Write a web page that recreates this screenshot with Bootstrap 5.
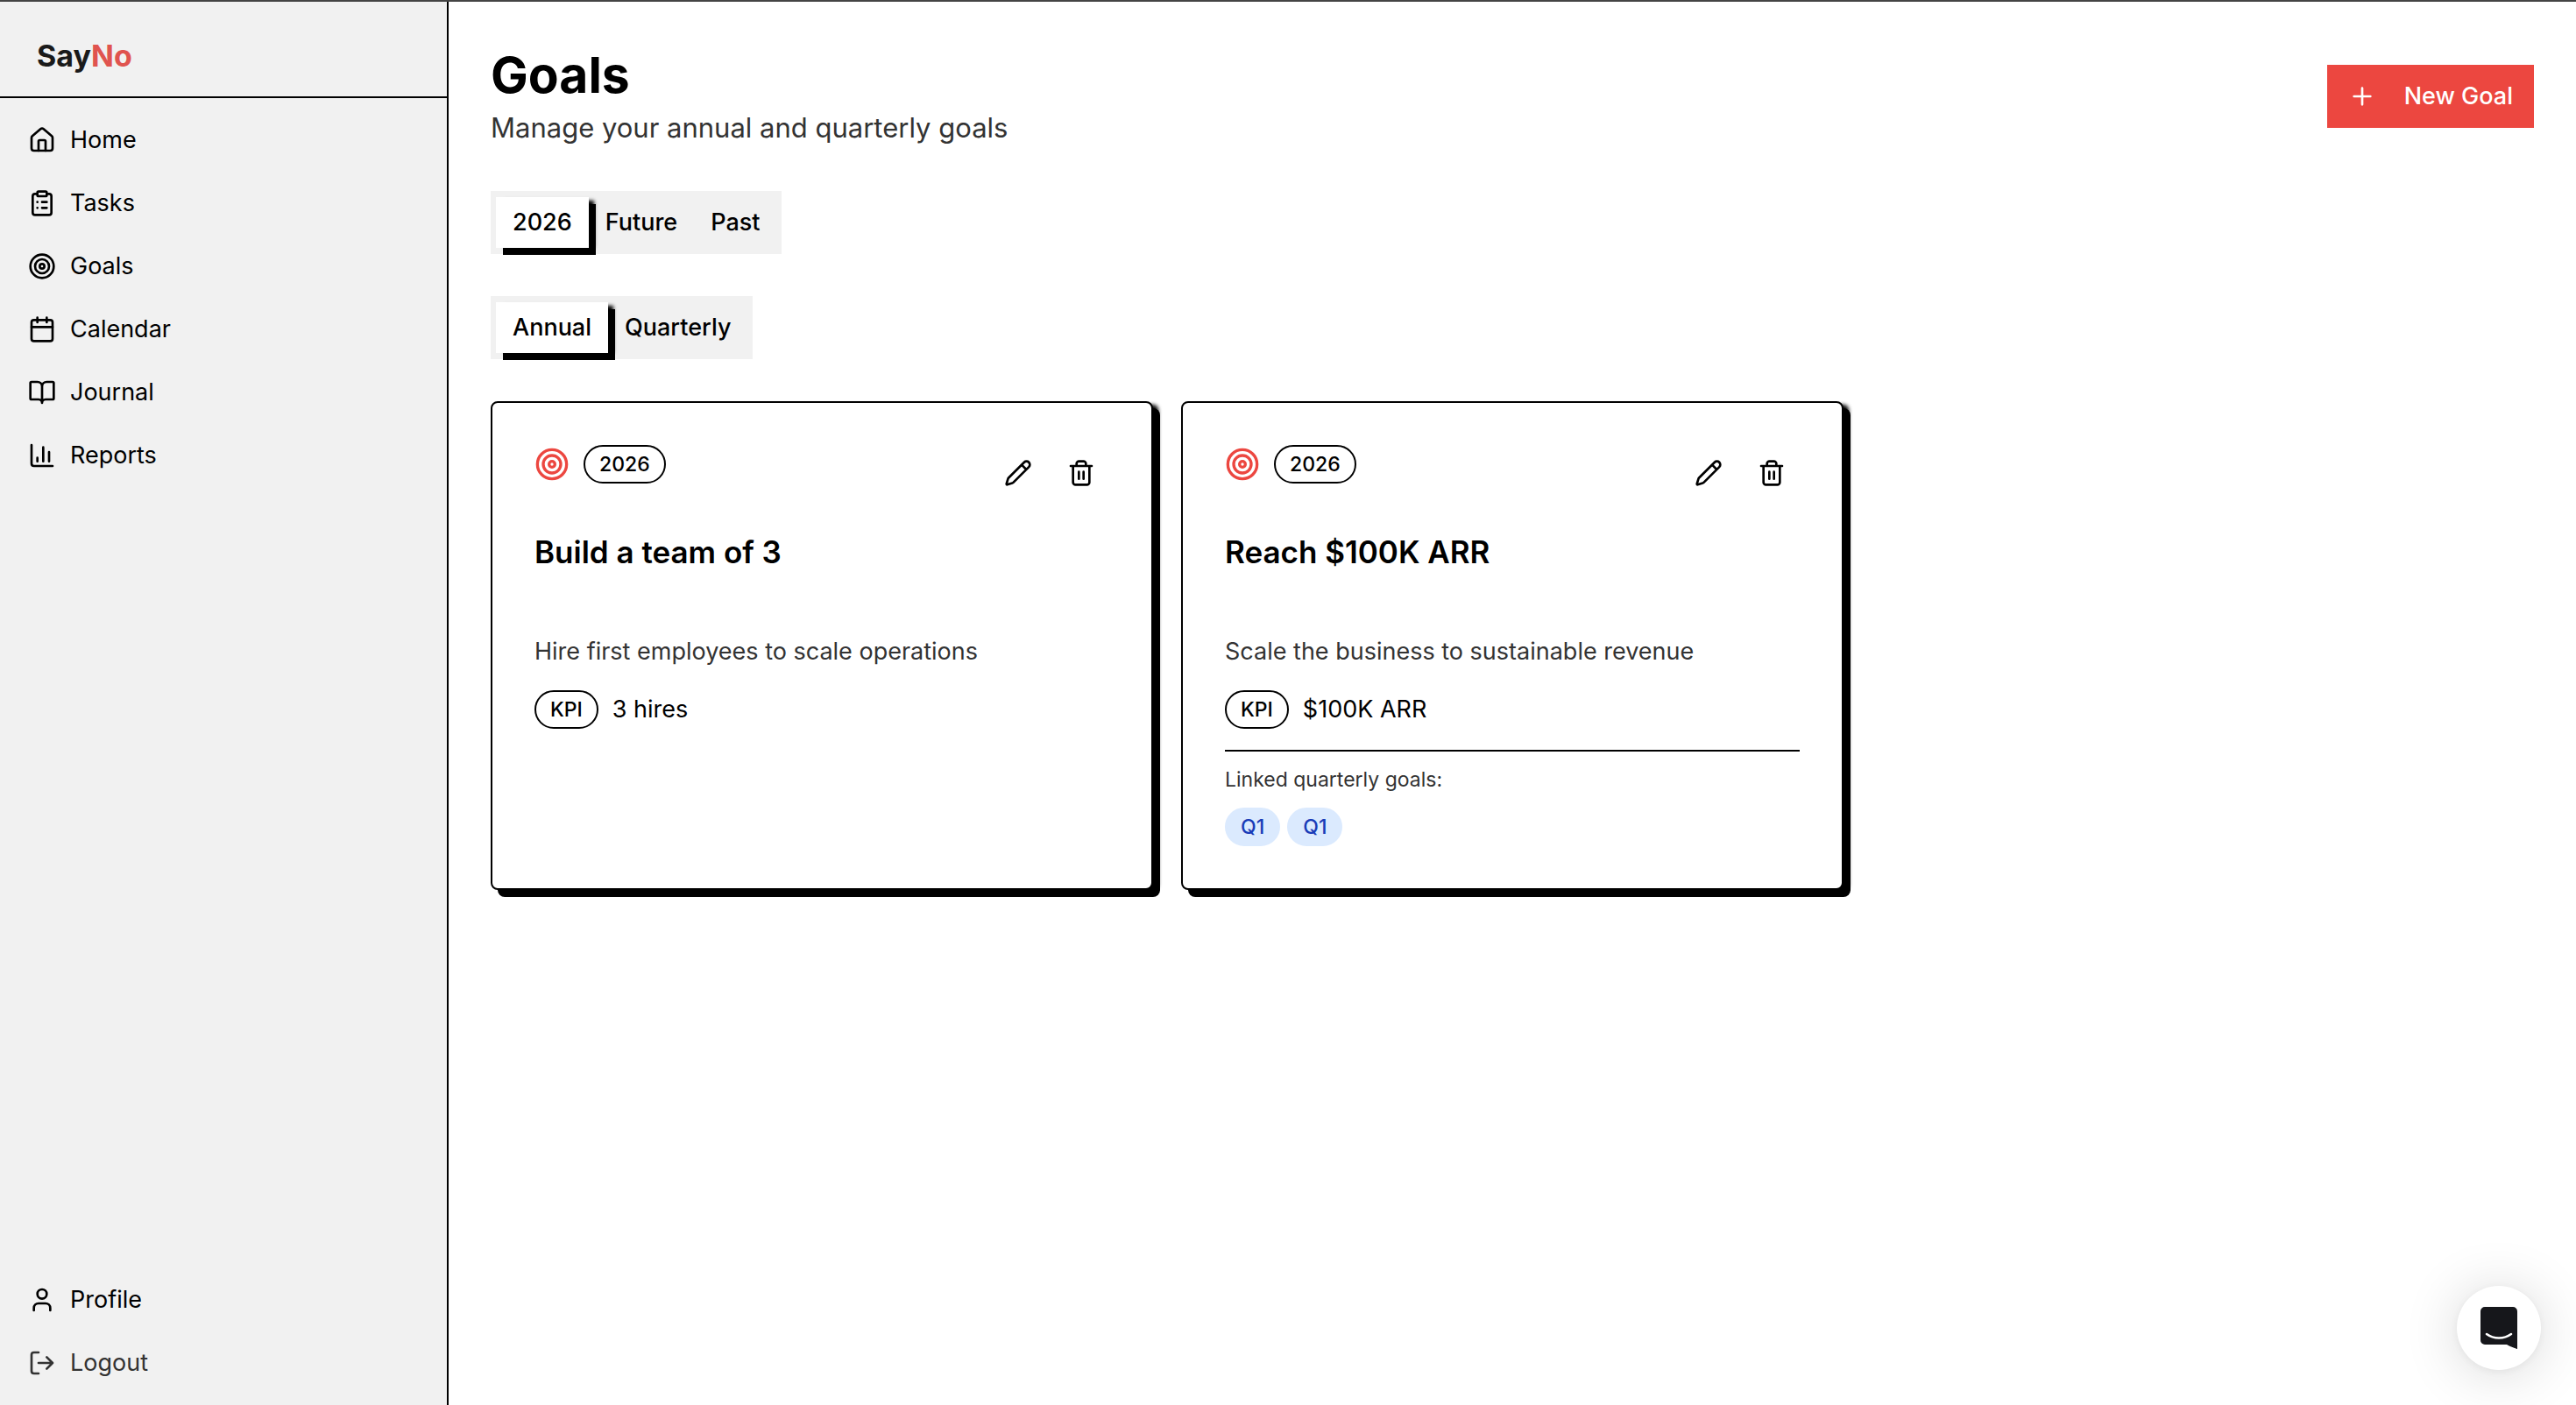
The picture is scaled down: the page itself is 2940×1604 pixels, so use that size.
<!DOCTYPE html>
<html lang="en">
<head>
<meta charset="utf-8">
<meta name="viewport" content="width=device-width, initial-scale=1">
<title>Goals - SayNo</title>
<link href="https://cdn.jsdelivr.net/npm/bootstrap@5.3.0/dist/css/bootstrap.min.css" rel="stylesheet">
<style>
  :root { --accent: #ec4740; --panel: #f1f1f1; --soft: #333; }
  body { font-family: Inter, "Open Sans", sans-serif; font-size: 27px; line-height: 40px; color: #000; border-top: 2px solid #444; background: #fff; }
  svg.ico { width: 32px; height: 32px; fill: none; stroke: currentColor; stroke-width: 2; stroke-linecap: round; stroke-linejoin: round; flex: none; }
  .sidebar { width: 512px; background: var(--panel); border-right: 2px solid #000; }
  .brand { padding: 42px 42px 26px; border-bottom: 2px solid #000; font-size: 34px; font-weight: 700; color: #1a1a1a; }
  .brand:hover { color: #1a1a1a; }
  .brand span { color: #e0544f; }
  .side-nav { gap: 8px; padding: 16px; }
  .side-nav .nav-link { display: flex; align-items: center; gap: 16px; height: 64px; padding: 0 16px; color: #000; width: 100%; border: 0; background: none; }
  .side-nav .logout { color: var(--soft); }
  .page { padding: 48px; }
  .page-title { font-size: 57px; line-height: 72px; font-weight: 700; }
  .page-sub { font-size: 31px; line-height: 48px; color: var(--soft); }
  .btn-new { --bs-btn-color: #fff; --bs-btn-bg: var(--accent); --bs-btn-hover-color: #fff; --bs-btn-hover-bg: #d63c36; --bs-btn-border-width: 0; --bs-btn-border-radius: 0; --bs-btn-padding-x: 24px; --bs-btn-padding-y: 16px; --bs-btn-font-size: 27px; --bs-btn-font-weight: 500; --bs-btn-line-height: 40px; gap: 32px; }
  .sections { display: flex; flex-direction: column; align-items: flex-start; gap: 48px; margin-top: 48px; }
  .seg { background: var(--panel); padding: 7px 6px; }
  .seg .nav-link { color: #000; font-weight: 500; padding: 9px 19px; border: 0; border-radius: 0; background: none; }
  .seg .nav-link.active, .goal { background: #fff; box-shadow: 8px 8px 0 0 #000, 8px 2px 4px -2px #000; }
  .goal-grid { --bs-gutter-x: 32px; --bs-gutter-y: 0; align-self: stretch; }
  .goal { border: 2px solid #000; border-radius: 8px; padding: 48px; height: 100%; }
  .goal .target { width: 40px; height: 40px; color: var(--accent); }
  .tag { display: inline-flex; align-items: center; height: 44px; border: 2px solid #000; border-radius: 22px; padding: 0 16px; font-size: 23px; line-height: 32px; font-weight: 500; }
  .tag-q { background: #dbeafe; border-color: #dbeafe; color: #193cb8; }
  .icon-btn { width: 64px; height: 64px; padding: 0; border: 0; color: #000; display: flex; align-items: center; justify-content: center; }
  .goal-title { font-size: 35px; line-height: 40px; font-weight: 600; margin: 38px 0 74px; }
  .goal-text { color: var(--soft); margin-bottom: 24px; }
  .linked { border-top: 2px solid #000; margin-top: 24px; padding-top: 16px; }
  .linked p { font-size: 23px; line-height: 32px; color: var(--soft); margin-bottom: 16px; }
  .chat { right: 40px; bottom: 40px; width: 96px; height: 96px; border: 0; border-radius: 50%; background: #fff; padding: 0; box-shadow: 0 2px 12px rgba(0,0,0,.06), 0 4px 64px rgba(0,0,0,.16); }
  .chat svg { width: 42px; height: 48px; display: block; margin: 0 auto; }
</style>
</head>
<body class="d-flex min-vh-100">
<aside class="sidebar d-flex flex-column flex-shrink-0">
  <a href="#" class="brand d-block text-decoration-none">Say<span>No</span></a>
  <nav class="side-nav nav flex-column">
    <a class="nav-link" href="#"><svg class="ico" viewBox="0 0 24 24"><path d="M15 21v-8a1 1 0 0 0-1-1h-4a1 1 0 0 0-1 1v8"/><path d="M3 10a2 2 0 0 1 .709-1.528l7-5.999a2 2 0 0 1 2.582 0l7 5.999A2 2 0 0 1 21 10v9a2 2 0 0 1-2 2H5a2 2 0 0 1-2-2z"/></svg>Home</a>
    <a class="nav-link" href="#"><svg class="ico" viewBox="0 0 24 24"><rect width="8" height="4" x="8" y="2" rx="1"/><path d="M16 4h2a2 2 0 0 1 2 2v14a2 2 0 0 1-2 2H6a2 2 0 0 1-2-2V6a2 2 0 0 1 2-2h2M12 11h4M12 16h4M8 11h.01M8 16h.01"/></svg>Tasks</a>
    <a class="nav-link" href="#" aria-current="page"><svg class="ico" viewBox="0 0 24 24"><circle cx="12" cy="12" r="10"/><circle cx="12" cy="12" r="6"/><circle cx="12" cy="12" r="2"/></svg>Goals</a>
    <a class="nav-link" href="#"><svg class="ico" viewBox="0 0 24 24"><path d="M8 2v4M16 2v4M3 10h18"/><rect width="18" height="18" x="3" y="4" rx="2"/></svg>Calendar</a>
    <a class="nav-link" href="#"><svg class="ico" viewBox="0 0 24 24"><path d="M12 7v14M3 18a1 1 0 0 1-1-1V4a1 1 0 0 1 1-1h5a4 4 0 0 1 4 4 4 4 0 0 1 4-4h5a1 1 0 0 1 1 1v13a1 1 0 0 1-1 1h-6a3 3 0 0 0-3 3 3 3 0 0 0-3-3z"/></svg>Journal</a>
    <a class="nav-link" href="#"><svg class="ico" viewBox="0 0 24 24"><path d="M3 3v16a2 2 0 0 0 2 2h16M18 17V9M13 17V5M8 17v-3"/></svg>Reports</a>
  </nav>
  <nav class="side-nav nav flex-column mt-auto">
    <a class="nav-link" href="#"><svg class="ico" viewBox="0 0 24 24"><path d="M19 21v-2a4 4 0 0 0-4-4H9a4 4 0 0 0-4 4v2"/><circle cx="12" cy="7" r="4"/></svg>Profile</a>
    <button type="button" class="nav-link logout"><svg class="ico" viewBox="0 0 24 24"><path d="M9 21H5a2 2 0 0 1-2-2V5a2 2 0 0 1 2-2h4M16 17l5-5-5-5M21 12H9"/></svg>Logout</button>
  </nav>
</aside>

<main class="page flex-grow-1">
  <header class="d-flex justify-content-between align-items-center">
    <div>
      <h1 class="page-title mb-0">Goals</h1>
      <p class="page-sub mb-0">Manage your annual and quarterly goals</p>
    </div>
    <button type="button" class="btn btn-new d-flex align-items-center"><svg class="ico" viewBox="0 0 24 24"><path d="M5 12h14M12 5v14"/></svg>New Goal</button>
  </header>

  <div class="sections">
    <div class="seg nav" role="tablist" aria-label="Period">
      <button type="button" class="nav-link active" role="tab" aria-selected="true">2026</button>
      <button type="button" class="nav-link" role="tab" aria-selected="false">Future</button>
      <button type="button" class="nav-link" role="tab" aria-selected="false">Past</button>
    </div>
    <div class="seg nav" role="tablist" aria-label="Goal type">
      <button type="button" class="nav-link active" role="tab" aria-selected="true">Annual</button>
      <button type="button" class="nav-link" role="tab" aria-selected="false">Quarterly</button>
    </div>

    <div class="row goal-grid">
      <div class="col-4">
        <article class="goal">
          <div class="d-flex justify-content-between align-items-start">
            <div class="d-flex align-items-center gap-3">
              <svg class="ico target" viewBox="0 0 24 24"><circle cx="12" cy="12" r="10"/><circle cx="12" cy="12" r="6"/><circle cx="12" cy="12" r="2"/></svg>
              <span class="tag">2026</span>
            </div>
            <div class="d-flex gap-2">
              <button type="button" class="btn icon-btn" aria-label="Edit goal"><svg class="ico" viewBox="0 0 24 24"><path d="M21.174 6.812a1 1 0 0 0-3.986-3.987L3.842 16.174a2 2 0 0 0-.5.83l-1.321 4.352a.5.5 0 0 0 .623.622l4.353-1.32a2 2 0 0 0 .83-.497zM15 5l4 4"/></svg></button>
              <button type="button" class="btn icon-btn" aria-label="Delete goal"><svg class="ico" viewBox="0 0 24 24"><path d="M3 6h18M19 6v14c0 1-1 2-2 2H7c-1 0-2-1-2-2V6M8 6V4c0-1 1-2 2-2h4c1 0 2 1 2 2v2M10 11v6M14 11v6"/></svg></button>
            </div>
          </div>
          <h2 class="goal-title">Build a team of 3</h2>
          <p class="goal-text">Hire first employees to scale operations</p>
          <div class="d-flex align-items-center gap-3"><span class="tag">KPI</span><span>3 hires</span></div>
        </article>
      </div>
      <div class="col-4">
        <article class="goal">
          <div class="d-flex justify-content-between align-items-start">
            <div class="d-flex align-items-center gap-3">
              <svg class="ico target" viewBox="0 0 24 24"><circle cx="12" cy="12" r="10"/><circle cx="12" cy="12" r="6"/><circle cx="12" cy="12" r="2"/></svg>
              <span class="tag">2026</span>
            </div>
            <div class="d-flex gap-2">
              <button type="button" class="btn icon-btn" aria-label="Edit goal"><svg class="ico" viewBox="0 0 24 24"><path d="M21.174 6.812a1 1 0 0 0-3.986-3.987L3.842 16.174a2 2 0 0 0-.5.83l-1.321 4.352a.5.5 0 0 0 .623.622l4.353-1.32a2 2 0 0 0 .83-.497zM15 5l4 4"/></svg></button>
              <button type="button" class="btn icon-btn" aria-label="Delete goal"><svg class="ico" viewBox="0 0 24 24"><path d="M3 6h18M19 6v14c0 1-1 2-2 2H7c-1 0-2-1-2-2V6M8 6V4c0-1 1-2 2-2h4c1 0 2 1 2 2v2M10 11v6M14 11v6"/></svg></button>
            </div>
          </div>
          <h2 class="goal-title">Reach $100K ARR</h2>
          <p class="goal-text">Scale the business to sustainable revenue</p>
          <div class="d-flex align-items-center gap-3"><span class="tag">KPI</span><span>$100K ARR</span></div>
          <div class="linked">
            <p>Linked quarterly goals:</p>
            <div class="d-flex gap-2"><span class="tag tag-q">Q1</span><span class="tag tag-q">Q1</span></div>
          </div>
        </article>
      </div>
    </div>
  </div>
</main>

<button type="button" class="chat position-fixed" aria-label="Open chat">
  <svg viewBox="0 0 42 48"><path fill="#16171b" d="M5 0h32a5 5 0 0 1 5 5v43s-6-1.600-12-5H5a5 5 0 0 1-5-5V5a5 5 0 0 1 5-5z"/><path d="M7 31c8 6 20 6 28 0" fill="none" stroke="#fff" stroke-width="2.600" stroke-linecap="round"/></svg>
</button>
<script src="https://cdn.jsdelivr.net/npm/bootstrap@5.3.0/dist/js/bootstrap.bundle.min.js"></script>
</body>
</html>
